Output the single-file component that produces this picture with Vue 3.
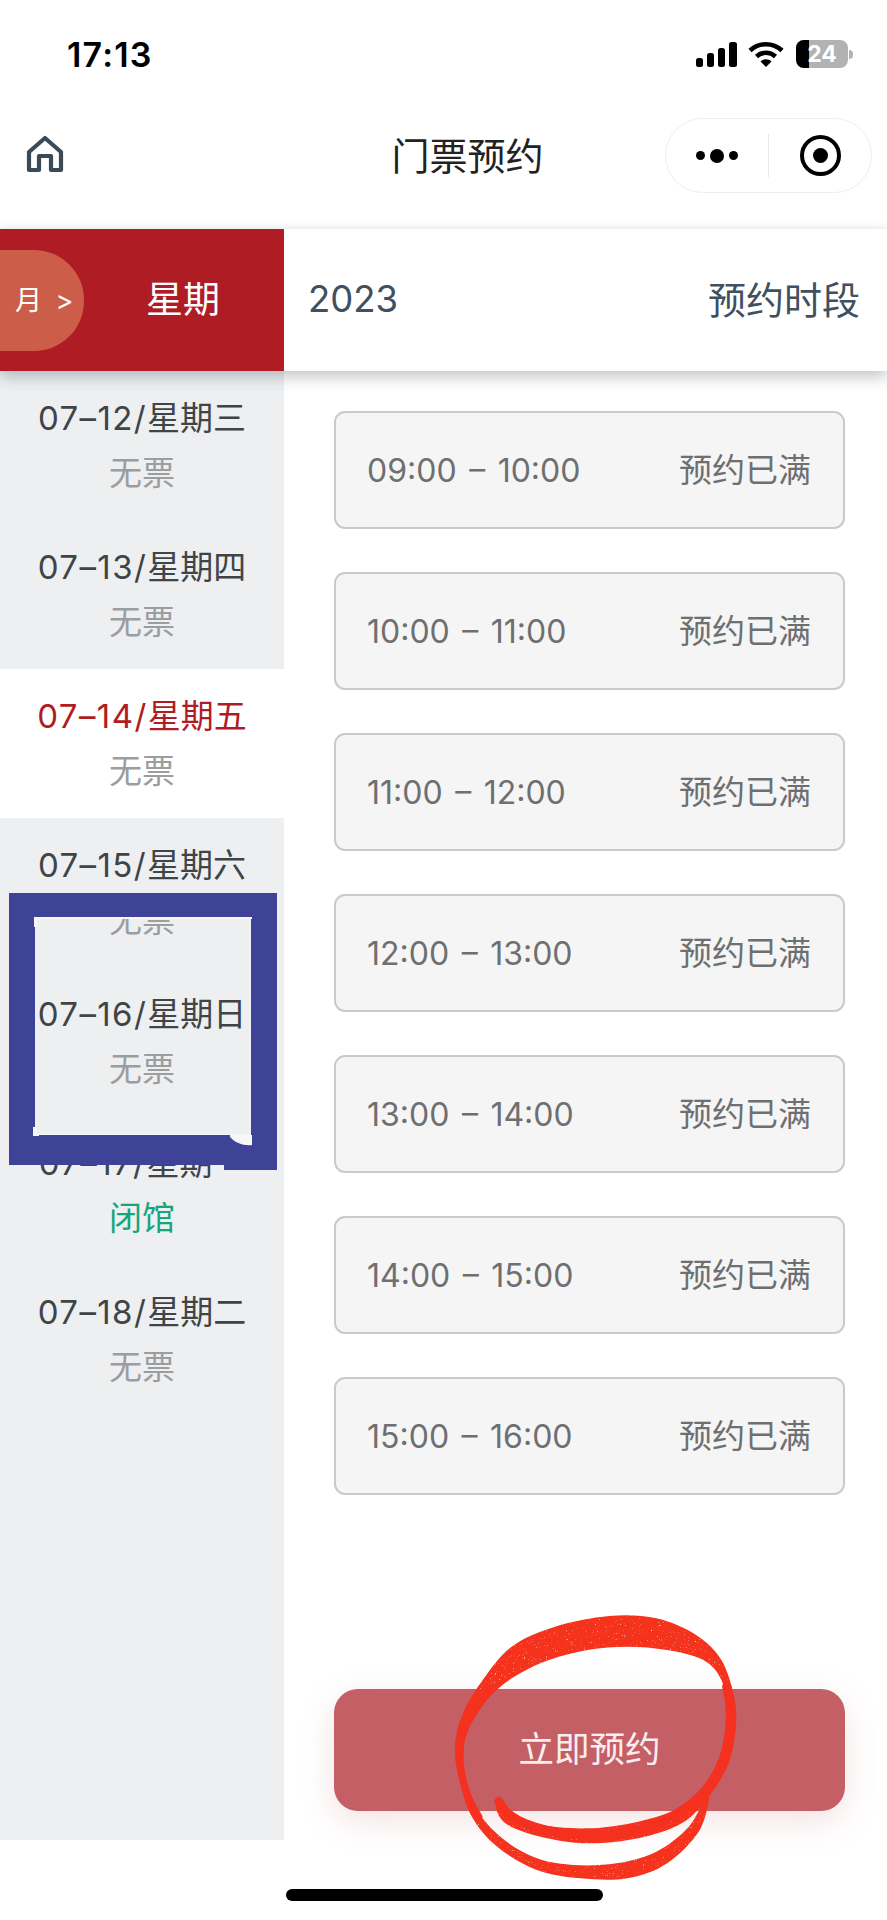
<template>
  <div class="page">
    <!-- 状态栏 -->
    <div class="status-bar">
      <span class="time">17:13</span>
      <div class="status-icons">
        <svg class="signal" width="41" height="25" viewBox="0 0 41 25">
          <rect x="0" y="16" width="7" height="9" rx="2.5" />
          <rect x="11" y="11" width="7" height="14" rx="2.5" />
          <rect x="22" y="6" width="7" height="19" rx="2.5" />
          <rect x="33" y="0" width="8" height="25" rx="2.5" />
        </svg>
        <svg class="wifi" width="36" height="26" viewBox="0 0 36 26">
          <path d="M2 9.5C11 1 25 1 34 9.5" />
          <path d="M8.5 15.5C14 10.5 22 10.5 27.5 15.5" />
          <path class="wifi-dot" d="M12.5 20.5C15.5 17.6 20.5 17.6 23.5 20.5L18 26Z" />
        </svg>
        <div class="battery">
          <div class="battery-body">
            <div class="battery-fill"></div>
            <span class="battery-num">24</span>
          </div>
          <div class="battery-nub"></div>
        </div>
      </div>
    </div>

    <!-- 导航栏 -->
    <div class="nav-bar">
      <svg class="home" width="60" height="60" viewBox="0 0 60 60">
        <path d="M14 27L30 13L46 27V45H36V31H24V45H14Z" />
      </svg>
      <span class="nav-title">门票预约</span>
      <div class="capsule">
        <div class="capsule-dots">
          <i class="dot"></i><i class="dot big"></i><i class="dot"></i>
        </div>
        <div class="capsule-line"></div>
        <div class="capsule-target"><i></i></div>
      </div>
    </div>

    <!-- 表头 -->
    <div class="table-head">
      <div class="head-left">
        <div class="month-pill">月 &gt;</div>
        <span class="week-label">星期</span>
      </div>
      <div class="head-right">
        <span class="head-year">2023</span>
        <span class="head-label">预约时段</span>
      </div>
    </div>

    <div class="content">
      <div class="side">
        <div
          v-for="d in days"
          :key="d.md"
          class="day"
          :class="{ active: d.active }"
        >
          <div class="day-date"><span class="day-md">{{ d.md }}/</span>{{ d.week }}</div>
          <div class="day-state" :class="{ closed: d.closed }">{{ d.state }}</div>
        </div>
      </div>
      <div class="main">
        <div class="slots">
          <div v-for="s in slots" :key="s" class="slot">
            <span class="slot-time">{{ s }}</span>
            <span class="slot-state">预约已满</span>
          </div>
        </div>
        <div class="book-btn">立即预约</div>
      </div>
    </div>

    <div class="home-bar"></div>

    <!-- 蓝色涂改框 -->
    <svg class="blue-mark" width="270" height="280" viewBox="0 0 270 280">
      <path
        fill-rule="evenodd"
        d="M0 0H268V277H215V272H0ZM26 25V242H242V25Z"
        fill="#3f4398"
      />
      <path
        d="M25 24H243V26H28V34H25ZM24 234H28V241H242V242H30V243H24ZM221 242H243V252C235 253 226 250 221 244Z"
        fill="#f6f7f8"
      />
    </svg>

    <!-- 红色手绘圈 -->
    <svg class="red-mark" width="567" height="320" viewBox="0 0 1568 960" preserveAspectRatio="none">
      <defs>
        <filter id="grain" x="0" y="0" width="100%" height="100%">
          <feTurbulence type="fractalNoise" baseFrequency="0.55" numOctaves="2" seed="4" result="n" />
          <feColorMatrix in="n" type="matrix" values="0 0 0 0 0  0 0 0 0 0  0 0 0 0 0  0 0 0 -4 3.7" result="a" />
          <feComposite in="SourceGraphic" in2="a" operator="in" />
        </filter>
      </defs>
      <path :d="ringPath" fill="#f5301f" filter="url(#grain)" />
      <path
        d="M495 605C520 670 640 705 760 708C900 700 1060 640 1115 480C1140 400 1140 320 1125 260"
        fill="none"
        stroke="#f5301f"
        stroke-width="26"
        stroke-linecap="round"
      />
      <path
        d="M470 270C415 350 385 400 386 470C390 540 410 600 440 650"
        fill="none"
        stroke="#f5301f"
        stroke-width="18"
        stroke-linecap="round"
      />
    </svg>
  </div>
</template>

<script setup>
const days = [
  { md: '07–12', week: '星期三', state: '无票' },
  { md: '07–13', week: '星期四', state: '无票' },
  { md: '07–14', week: '星期五', state: '无票', active: true },
  { md: '07–15', week: '星期六', state: '无票' },
  { md: '07–16', week: '星期日', state: '无票' },
  { md: '07–17', week: '星期一', state: '闭馆', closed: true },
  { md: '07–18', week: '星期二', state: '无票' }
]

const slots = [
  '09:00 – 10:00',
  '10:00 – 11:00',
  '11:00 – 12:00',
  '12:00 – 13:00',
  '13:00 – 14:00',
  '14:00 – 15:00',
  '15:00 – 16:00'
]

// outline of the hand drawn circle, smoothed with catmull-rom
const ringPoints = [
  [495, 590], [525, 630], [600, 672], [740, 685], [880, 665], [1000, 620], [1085, 540], [1125, 440],
  [1130, 340], [1110, 240], [1060, 180], [960, 150], [850, 140], [740, 150], [620, 185], [530, 235],
  [470, 290], [420, 360], [398, 440], [405, 540], [440, 640], [510, 720], [600, 775], [700, 795],
  [820, 790], [930, 755], [1020, 680], [1075, 580], [1050, 690], [960, 790], [850, 835], [720, 835],
  [600, 810], [490, 740], [420, 650], [385, 540], [373, 440], [395, 340], [450, 240], [530, 140],
  [650, 80], [800, 48], [930, 55], [1040, 105], [1110, 180], [1145, 290], [1150, 380], [1130, 490],
  [1075, 590], [1000, 670], [880, 715], [740, 730], [610, 710], [520, 675], [488, 630]
]

const smooth = (pts) => {
  let d = `M${pts[0][0]} ${pts[0][1]}`
  const n = pts.length
  for (let i = 0; i < n; i++) {
    const p0 = pts[(i - 1 + n) % n]
    const p1 = pts[i]
    const p2 = pts[(i + 1) % n]
    const p3 = pts[(i + 2) % n]
    const c1x = p1[0] + (p2[0] - p0[0]) / 6
    const c1y = p1[1] + (p2[1] - p0[1]) / 6
    const c2x = p2[0] - (p3[0] - p1[0]) / 6
    const c2y = p2[1] - (p3[1] - p1[1]) / 6
    d += `C${c1x} ${c1y} ${c2x} ${c2y} ${p2[0]} ${p2[1]}`
  }
  return d + 'Z'
}

const ringPath = smooth(ringPoints)
</script>

<style>
html, body {
  margin: 0;
  background: #fff;
}
</style>

<style scoped>
.page {
  position: relative;
  width: 887px;
  height: 1920px;
  overflow: hidden;
  background: #fff;
  font-family: Inter, "Noto Sans CJK SC", sans-serif;
}

.status-bar {
  height: 108px;
  display: flex;
  justify-content: space-between;
  padding: 36px 34px 0 67px;
  box-sizing: border-box;
}
.time {
  font-size: 34px;
  line-height: 37px;
  font-weight: 600;
  color: #000;
  letter-spacing: 1.2px;
}
.status-icons {
  display: flex;
  align-items: flex-start;
}
.signal {
  margin-top: 6px;
  fill: #000;
}
.wifi {
  margin: 5px 0 0 11px;
}
.wifi path {
  fill: none;
  stroke: #000;
  stroke-width: 4.5;
}
.wifi .wifi-dot {
  fill: #000;
  stroke: none;
}
.battery {
  display: flex;
  align-items: center;
  margin: 4px 0 0 12px;
}
.battery-body {
  position: relative;
  width: 52px;
  height: 28px;
  border-radius: 8px;
  overflow: hidden;
  background: #b2b2b2;
  display: flex;
  align-items: center;
  justify-content: center;
}
.battery-fill {
  position: absolute;
  left: 0;
  top: 0;
  bottom: 0;
  width: 13px;
  background: #000;
}
.battery-num {
  position: relative;
  color: #fff;
  font-size: 23px;
  font-weight: 700;
}
.battery-nub {
  width: 4px;
  height: 9px;
  margin-left: 1px;
  border-radius: 0 4px 4px 0;
  background: #b2b2b2;
}

.nav-bar {
  position: relative;
  height: 121px;
  box-sizing: border-box;
  padding: 0 0 30px 48px;
  display: flex;
  align-items: center;
  justify-content: center;
}
.home {
  position: absolute;
  left: 15px;
  top: 17px;
}
.home path {
  fill: none;
  stroke: #3a4a57;
  stroke-width: 4.2;
  stroke-linejoin: round;
}
.nav-title {
  font-size: 38px;
  color: #222;
}
.capsule {
  position: absolute;
  left: 665px;
  top: 10px;
  width: 207px;
  height: 75px;
  box-sizing: border-box;
  border: 1px solid #eeeeee;
  border-radius: 38px;
  display: flex;
  align-items: center;
}
.capsule-dots {
  display: flex;
  align-items: center;
  justify-content: center;
  gap: 5px;
  width: 102px;
}
.dot {
  width: 9px;
  height: 9px;
  border-radius: 50%;
  background: #000;
}
.dot.big {
  width: 14px;
  height: 14px;
}
.capsule-line {
  width: 1px;
  height: 43px;
  background: #e6e6e6;
}
.capsule-target {
  width: 41px;
  height: 41px;
  margin-left: 31px;
  box-sizing: border-box;
  border: 4.5px solid #000;
  border-radius: 50%;
  display: flex;
  align-items: center;
  justify-content: center;
}
.capsule-target i {
  width: 15px;
  height: 15px;
  border-radius: 50%;
  background: #000;
}

.table-head {
  position: relative;
  z-index: 2;
  display: flex;
  height: 142px;
  box-shadow: 0 6px 14px rgba(40, 50, 60, 0.28), 0 -2px 6px rgba(0, 0, 0, 0.03);
  background: #fff;
}
.head-left {
  position: relative;
  width: 284px;
  flex: none;
  background: #b01c24;
  color: #fff;
}
.month-pill {
  position: absolute;
  left: 0;
  top: 21px;
  width: 84px;
  height: 101px;
  box-sizing: border-box;
  padding-left: 15px;
  border-radius: 0 50px 50px 0;
  background: #cc5d48;
  font-size: 27px;
  word-spacing: 6px;
  line-height: 101px;
  white-space: nowrap;
}
.week-label {
  position: absolute;
  left: 146px;
  top: 0;
  font-size: 37px;
  line-height: 142px;
}
.head-right {
  flex: 1;
  display: flex;
  align-items: center;
  justify-content: space-between;
  padding: 0 27px 3px 24px;
  color: #3f5060;
}
.head-year {
  font-size: 36.5px;
}
.head-label {
  font-size: 38px;
  padding-bottom: 3px;
}

.content {
  display: flex;
  height: 1469px;
}
.side {
  width: 284px;
  flex: none;
  background: #edeff1;
}
.day {
  height: 149px;
  box-sizing: border-box;
  padding-top: 24px;
  text-align: center;
}
.day.active {
  background: #fff;
}
.day-date {
  font-size: 33px;
  line-height: 46px;
  color: #3f4447;
  white-space: nowrap;
}
.day-md {
  letter-spacing: 1.4px;
}
.day.active .day-date {
  color: #b01c24;
}
.day-state {
  margin-top: 9px;
  font-size: 33px;
  line-height: 46px;
  color: #9b9d9f;
}
.day-state.closed {
  color: #17a57c;
}

.main {
  flex: 1;
  padding: 40px 42px 0 50px;
}
.slots {
  display: flex;
  flex-direction: column;
  gap: 43px;
}
.slot {
  height: 118px;
  box-sizing: border-box;
  padding: 0 32px 0 31px;
  display: flex;
  align-items: center;
  justify-content: space-between;
  border: 2px solid #c9cacb;
  border-radius: 11px;
  background: #f5f5f5;
  color: #6e6f70;
  font-size: 33px;
}
.slot-time {
  font-size: 32px;
  word-spacing: 3.5px;
}
.slot-state {
  padding-bottom: 5px;
}
.book-btn {
  margin-top: 194px;
  height: 122px;
  box-sizing: border-box;
  padding-bottom: 7px;
  border-radius: 24px;
  background: #c45f66;
  box-shadow: 0 10px 34px rgba(196, 95, 102, 0.18);
  color: #f8eeee;
  font-size: 35.5px;
  display: flex;
  align-items: center;
  justify-content: center;
}

.home-bar {
  position: absolute;
  left: 286px;
  top: 1889px;
  width: 317px;
  height: 12px;
  border-radius: 6px;
  background: #000;
}
.blue-mark {
  position: absolute;
  left: 9px;
  top: 893px;
  z-index: 3;
}
.red-mark {
  position: absolute;
  left: 320px;
  top: 1600px;
  z-index: 3;
}
</style>
